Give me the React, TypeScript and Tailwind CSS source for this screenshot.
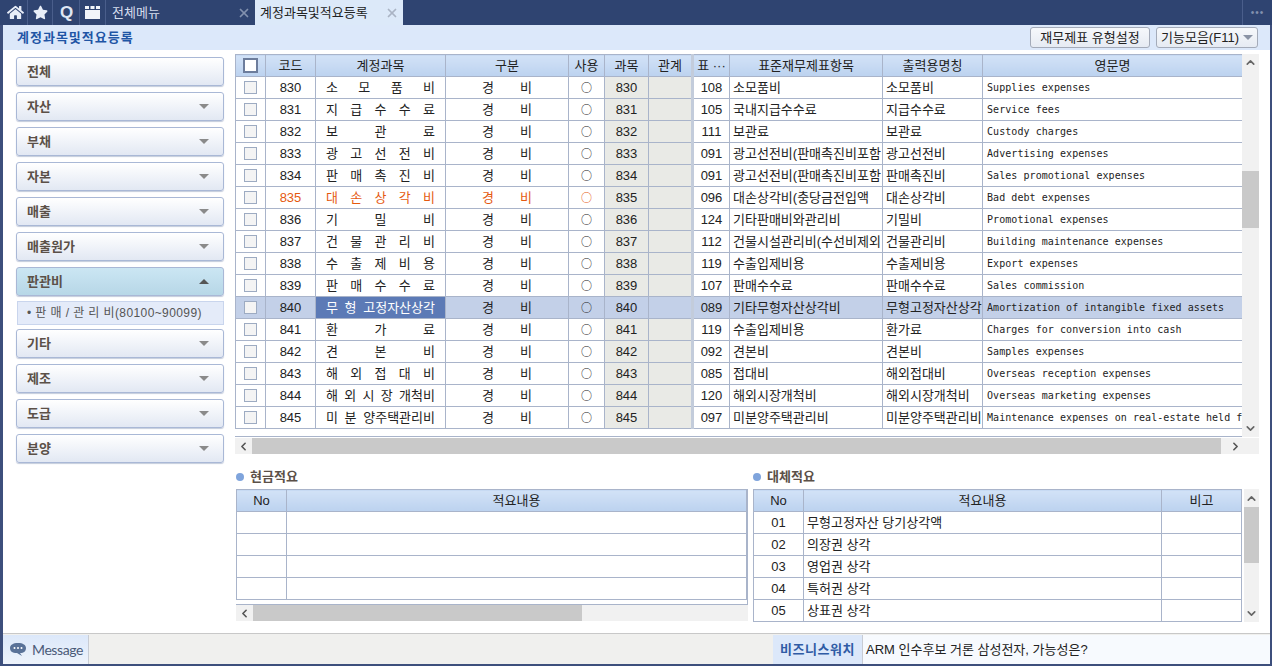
import { ChevronDown, ChevronLeft, ChevronRight, ChevronUp, X } from 'lucide-react'
import { FaHome, FaStar } from 'react-icons/fa'

const rows = [
  ['830', '소 모 품 비', '108', '소모품비', '소모품비', 'Supplies expenses'],
  ['831', '지 급 수 수 료', '105', '국내지급수수료', '지급수수료', 'Service fees'],
  ['832', '보 관 료', '111', '보관료', '보관료', 'Custody charges'],
  ['833', '광 고 선 전 비', '091', '광고선전비(판매촉진비포함', '광고선전비', 'Advertising expenses'],
  ['834', '판 매 촉 진 비', '091', '광고선전비(판매촉진비포함', '판매촉진비', 'Sales promotional expenses'],
  ['835', '대 손 상 각 비', '096', '대손상각비(충당금전입액', '대손상각비', 'Bad debt expenses'],
  ['836', '기 밀 비', '124', '기타판매비와관리비', '기밀비', 'Promotional expenses'],
  ['837', '건 물 관 리 비', '112', '건물시설관리비(수선비제외', '건물관리비', 'Building maintenance expenses'],
  ['838', '수 출 제 비 용', '119', '수출입제비용', '수출제비용', 'Export expenses'],
  ['839', '판 매 수 수 료', '107', '판매수수료', '판매수수료', 'Sales commission'],
  ['840', '무 형 고정자산상각', '089', '기타무형자산상각비', '무형고정자산상각', 'Amortization of intangible fixed assets'],
  ['841', '환 가 료', '119', '수출입제비용', '환가료', 'Charges for conversion into cash'],
  ['842', '견 본 비', '092', '견본비', '견본비', 'Samples expenses'],
  ['843', '해 외 접 대 비', '085', '접대비', '해외접대비', 'Overseas reception expenses'],
  ['844', '해 외 시 장 개척비', '120', '해외시장개척비', '해외시장개척비', 'Overseas marketing expenses'],
  ['845', '미 분 양주택관리비', '097', '미분양주택관리비', '미분양주택관리비', 'Maintenance expenses on real-estate held for sale'],
]

const menu = ['전체', '자산', '부채', '자본', '매출', '매출원가', '판관비', '기타', '제조', '도급', '분양']
const altRows = [
  ['01', '무형고정자산 당기상각액'],
  ['02', '의장권 상각'],
  ['03', '영업권 상각'],
  ['04', '특허권 상각'],
  ['05', '상표권 상각'],
]

const th = 'h-[22px] border border-[#a9b4ca] bg-gradient-to-b from-[#d2e2f7] to-[#bcd2ef] p-0 text-[13px] font-normal text-[#222]'
const cell = 'h-[22px] overflow-hidden whitespace-nowrap border border-[#a9b4ca] p-0 leading-none'
const td = `${cell} text-[13px]`

function MenuButton({ label }: { label: string }) {
  const active = label === '판관비'
  return (
    <div
      className={`flex h-[29px] shrink-0 items-center justify-between rounded-[3px] border border-[#a9b8d6] pl-2.5 pr-3.5 shadow-[0_1px_1px_#c4ccdc] ${
        active ? 'bg-gradient-to-b from-[#cbe6f3] to-[#b7d7e7]' : 'bg-gradient-to-b from-white to-[#e2e8f3]'
      }`}
    >
      <span className="text-[13px] font-bold text-[#5b5048]">{label}</span>
      {label !== '전체' &&
        (active ? (
          <span className="h-0 w-0 border-x-[5px] border-b-[5px] border-x-transparent border-b-[#555]" />
        ) : (
          <span className="h-0 w-0 border-x-[5px] border-t-[5px] border-x-transparent border-t-[#8a8a8a]" />
        ))}
    </div>
  )
}

function SectionTitle({ label }: { label: string }) {
  return (
    <div className="flex h-[22px] items-center gap-1.5 pb-1">
      <span className="h-2 w-2 rounded-full bg-[#7fa4dc]" />
      <span className="text-[13px] font-bold text-[#5b5048]">{label}</span>
    </div>
  )
}

function CheckBox({ header }: { header?: boolean }) {
  if (header) return <span className="mx-auto block h-[15px] w-[15px] border-2 border-[#6d7d9c] bg-white" />
  return <span className="mx-auto block h-[13px] w-[13px] border border-[#9dabc2] bg-[#f4f4f4]" />
}

export default function App() {
  return (
    <div className="flex h-[666px] w-[1272px] flex-col overflow-hidden bg-white font-['Liberation_Sans','Noto_Sans_CJK_KR',sans-serif] text-[#222]">
      {/* tab bar */}
      <div className="flex h-[25px] shrink-0 items-stretch bg-[#2f4471] text-[#e8eef8]">
        <div className="flex w-[28px] items-center justify-center border-r border-[#4a5e8b] pl-[3px]">
          <FaHome size={17} />
        </div>
        <div className="flex w-[25px] items-center justify-center border-r border-[#4a5e8b]">
          <FaStar size={15} />
        </div>
        <div className="flex w-[27px] items-center justify-center border-r border-[#4a5e8b] pl-px text-[17px] font-bold text-[#dfe6f3]">Q</div>
        <div className="flex w-[26px] items-center justify-center border-r border-[#4a5e8b]">
          <svg width="15" height="13" viewBox="0 0 15 13" fill="#f2f5fa">
            <rect x="0" y="0" width="4" height="3" />
            <rect x="5.5" y="0" width="4" height="3" />
            <rect x="11" y="0" width="4" height="3" />
            <rect x="0" y="4" width="15" height="9" />
          </svg>
        </div>
        <div className="flex w-[149px] items-center justify-between pl-[6px] pr-[4px] text-[13px] text-[#d5dded]">
          <span>전체메뉴</span>
          <X size={14} strokeWidth={3} className="text-[#8291ae]" />
        </div>
        <div className="flex w-[148px] items-center justify-between bg-[#dce9f9] pl-[5px] pr-[4px] text-[13px] text-[#222]">
          <span>계정과목및적요등록</span>
          <X size={14} strokeWidth={3} className="text-[#aab4c4]" />
        </div>
        <div className="flex-1" />
        <div className="flex w-[30px] items-center justify-center border-l border-[#4a5e8b] text-[10px] tracking-[1px] text-[#8291ae]">•••</div>
      </div>

      <div className="flex min-h-0 flex-1 flex-col border-l-[3px] border-r-2 border-[#3d4f7c]">
        {/* title bar */}
        <div className="flex h-[25px] shrink-0 items-center justify-between bg-[#dce8fa] pl-[14px] pr-[12px]">
          <span className="text-[13px] font-bold tracking-[1px] text-[#1f55a5]">계정과목및적요등록</span>
          <div className="flex gap-[6px]">
            <button className="h-[21px] w-[120px] rounded-[3px] border border-[#a4abb9] bg-gradient-to-b from-[#f6f8fb] to-[#e6ebf3] text-[13px] text-[#222]">
              재무제표 유형설정
            </button>
            <button className="flex h-[21px] w-[102px] items-center justify-center gap-1 rounded-[3px] border border-[#a4abb9] bg-gradient-to-b from-[#f6f8fb] to-[#e6ebf3] text-[13px] text-[#222]">
              기능모음(F11)
              <span className="h-0 w-0 border-x-[5px] border-t-[5px] border-x-transparent border-t-[#8a93a5]" />
            </button>
          </div>
        </div>

        {/* body */}
        <div className="flex min-h-0 flex-1 pl-[13px] pt-[4px]">
          {/* left menu */}
          <div className="flex w-[208px] shrink-0 flex-col pt-[3px]">
            {menu.map((m) => (
              <div key={m} className="mb-[6px]">
                <MenuButton label={m} />
                {m === '판관비' && (
                  <div className="mb-[-2px] ml-px mt-[5px] flex h-[24px] items-center border border-[#c9d5ed] bg-[#e4ebf9] pl-[9px] text-[12px] tracking-[0.4px] text-[#555]">
                    • 판 매 / 관 리 비(80100~90099)
                  </div>
                )}
              </div>
            ))}
          </div>

          {/* right content */}
          <div className="ml-[11px] flex w-[1024px] flex-col">
            <div className="flex h-[383px] shrink-0">
              <div className="h-full w-[1007px] overflow-hidden border-b border-[#a9b4ca]">
                <table className="w-[1007px] table-fixed border-collapse">
                  <colgroup>
                    <col className="w-[30px]" />
                    <col className="w-[50px]" />
                    <col className="w-[130px]" />
                    <col className="w-[123px]" />
                    <col className="w-[36px]" />
                    <col className="w-[44px]" />
                    <col className="w-[44px]" />
                    <col className="w-[37px]" />
                    <col className="w-[153px]" />
                    <col className="w-[100px]" />
                    <col className="w-[260px]" />
                  </colgroup>
                  <thead>
                    <tr>
                      <th className={th}>
                        <CheckBox header />
                      </th>
                      <th className={th}>코드</th>
                      <th className={th}>계정과목</th>
                      <th className={th}>구분</th>
                      <th className={th}>사용</th>
                      <th className={th}>과목</th>
                      <th className={`${th} border-r-[3px] border-r-[#c3ccdb]`}>관계</th>
                      <th className={th}>표 ···</th>
                      <th className={th}>표준재무제표항목</th>
                      <th className={th}>출력용명칭</th>
                      <th className={th}>영문명</th>
                    </tr>
                  </thead>
                  <tbody>
                    {rows.map((r) => {
                      const selected = r[0] === '840'
                      const warn = r[0] === '835'
                      const tone = warn ? 'text-[#e5590f]' : ''
                      return (
                        <tr key={r[0]} className={selected ? 'bg-[#c3d0e8]' : ''}>
                          <td className={td}>
                            <CheckBox />
                          </td>
                          <td className={`${td} text-center ${tone}`}>{r[0]}</td>
                          <td className={`${td} px-[10px] [text-align-last:justify] ${selected ? 'bg-[#5c7ab6] text-white' : tone}`}>{r[1]}</td>
                          <td className={`${td} px-[36px] [text-align-last:justify] ${tone}`}>경 비</td>
                          <td className={`${cell} text-center font-['Noto_Sans_CJK_KR',sans-serif] text-[11px] font-medium ${tone}`}>○</td>
                          <td className={`${td} text-center ${selected ? '' : 'bg-[#e9eae6]'}`}>{r[0]}</td>
                          <td className={`${td} border-r-[3px] border-r-[#c3ccdb] ${selected ? '' : 'bg-[#e9eae6]'}`} />
                          <td className={`${td} text-center`}>{r[2]}</td>
                          <td className={`${td} pl-[3px]`}>{r[3]}</td>
                          <td className={`${td} pl-[3px]`}>{r[4]}</td>
                          <td className={`${cell} pl-[4px] pt-px font-['DejaVu_Sans_Mono',monospace] text-[10px] tracking-[0.06px]`}>{r[5]}</td>
                        </tr>
                      )
                    })}
                  </tbody>
                </table>
              </div>
              <div className="flex h-full w-[17px] flex-col items-center bg-[#f1f1f1] text-[#666]">
                <div className="flex h-[17px] items-center">
                  <ChevronUp size={13} strokeWidth={3} />
                </div>
                <div className="h-[100px]" />
                <div className="h-[57px] w-full bg-[#c9c9c9]" />
                <div className="flex-1" />
                <div className="flex h-[17px] items-center">
                  <ChevronDown size={13} strokeWidth={3} />
                </div>
              </div>
            </div>

            <div className="mt-px flex h-[16px] shrink-0 items-center bg-[#f1f1f1] text-[#555]">
              <div className="flex w-[17px] justify-center">
                <ChevronLeft size={13} strokeWidth={3} />
              </div>
              <div className="h-full w-[969px] bg-[#c9c9c9]" />
              <div className="flex w-[28px] justify-center">
                <ChevronRight size={13} strokeWidth={3} />
              </div>
            </div>

            <div className="mt-[14px] flex gap-[5px] pl-px">
              {/* cash */}
              <div className="w-[512px]">
                <SectionTitle label="현금적요" />
                <div className="mt-[-1px] h-[116px] overflow-hidden border-b border-r border-[#a9b4ca]">
                  <table className="w-full table-fixed border-collapse">
                    <colgroup>
                      <col className="w-[50px]" />
                      <col />
                    </colgroup>
                    <thead>
                      <tr>
                        <th className={th}>No</th>
                        <th className={th}>적요내용</th>
                      </tr>
                    </thead>
                    <tbody>
                      {[0, 1, 2, 3].map((n) => (
                        <tr key={n}>
                          <td className={td} />
                          <td className={td} />
                        </tr>
                      ))}
                    </tbody>
                  </table>
                </div>
                <div className="flex h-[16px] items-center bg-[#f1f1f1] text-[#555]">
                  <div className="flex w-[17px] justify-center">
                    <ChevronLeft size={13} strokeWidth={3} />
                  </div>
                  <div className="h-full w-[329px] bg-[#c9c9c9]" />
                  <div className="flex-1" />
                </div>
              </div>

              {/* replacement */}
              <div className="w-[506px]">
                <SectionTitle label="대체적요" />
                <div className="mt-[-1px] flex h-[133px]">
                  <div className="w-[489px]">
                    <table className="w-[489px] table-fixed border-collapse">
                      <colgroup>
                        <col className="w-[50px]" />
                        <col />
                        <col className="w-[80px]" />
                      </colgroup>
                      <thead>
                        <tr>
                          <th className={th}>No</th>
                          <th className={th}>적요내용</th>
                          <th className={th}>비고</th>
                        </tr>
                      </thead>
                      <tbody>
                        {altRows.map((r) => (
                          <tr key={r[0]}>
                            <td className={`${td} text-center`}>{r[0]}</td>
                            <td className={`${td} pl-[3px]`}>{r[1]}</td>
                            <td className={td} />
                          </tr>
                        ))}
                      </tbody>
                    </table>
                  </div>
                  <div className="ml-[2px] flex h-full w-[15px] flex-col items-center bg-[#f1f1f1] text-[#666]">
                    <div className="flex h-[18px] items-center">
                      <ChevronUp size={13} strokeWidth={3} />
                    </div>
                    <div className="h-[56px] w-full bg-[#c9c9c9]" />
                    <div className="flex-1" />
                    <div className="flex h-[18px] items-center">
                      <ChevronDown size={13} strokeWidth={3} />
                    </div>
                  </div>
                </div>
              </div>
            </div>
          </div>
        </div>

        {/* footer */}
        <div className="flex h-[31px] shrink-0 border-t border-[#c8c8c8] bg-[#f0f0ee]">
          <div className="mt-px flex w-[86px] items-center gap-[5px] border-r border-[#c8ccd4] bg-gradient-to-b from-[#dce8fa] to-[#eef3fb] pl-[6px]">
            <svg width="18" height="14" viewBox="0 0 18 14">
              <path d="M9 0c5 0 8 2 8 5s-2 5-6 5l2 3-5-3C3 10 1 8 1 5s3-5 8-5z" fill="#5a7298" />
              <circle cx="5.5" cy="5" r="1" fill="#fff" />
              <circle cx="9" cy="5" r="1" fill="#fff" />
              <circle cx="12.5" cy="5" r="1" fill="#fff" />
            </svg>
            <span className="font-['Lato',sans-serif] text-[14px] tracking-[-0.4px] text-[#4b5a78]">Message</span>
          </div>
          <div className="flex-1" />
          <div className="mt-px flex w-[90px] items-center justify-center border-r border-[#c8ccd4] bg-[#dce8fa] text-[13px] font-bold tracking-[0.5px] text-[#2f5ba5]">
            비즈니스워치
          </div>
          <div className="mt-px flex w-[407px] items-center bg-[#f7fafe] pl-[3px] text-[13px] text-[#222]">
            ARM 인수후보 거론 삼성전자, 가능성은?
          </div>
        </div>
      </div>
      <div className="h-[2px] shrink-0 bg-[#3d4f7c]" />
    </div>
  )
}
